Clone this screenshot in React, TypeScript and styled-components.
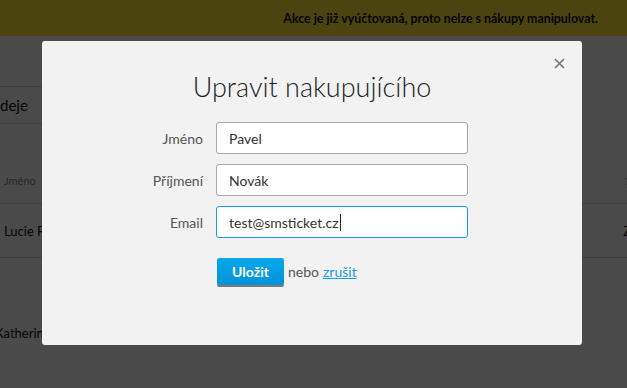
import React from 'react';
import styled, { createGlobalStyle } from 'styled-components';

const GlobalStyle = createGlobalStyle`
  html, body {
    margin: 0;
    padding: 0;
    width: 627px;
    height: 388px;
    overflow: hidden;
    background: #f7f7f7;
    font-family: Lato, "Open Sans", sans-serif;
    color: #333;
  }
`;

// ---- page under the dialog ----
const Page = styled.div`
  position: relative;
  width: 627px;
  height: 388px;
  overflow: hidden;
`;

const Banner = styled.div`
  height: 36px;
  background: #fae339;
  display: flex;
  align-items: center;
  justify-content: flex-end;
  padding-right: 29px;
  font-size: 12.4px;
  font-weight: 700;
  color: #111;
`;

const Tabs = styled.div`
  margin-top: 50px;
  width: 300px;
  height: 36px;
  border-top: 1px solid #d3d3d3;
  border-bottom: 1px solid #d3d3d3;
  display: flex;
  align-items: center;
  font-size: 15px;
  color: #111;
`;

const Table = styled.div`
  margin-top: 33px;
  display: flex;
  flex-direction: column;
`;

const Row = styled.div<{ $head?: boolean; $line?: boolean; $gap?: number; $shift?: number }>`
  height: ${(p) => (p.$head ? '46px' : '53px')};
  margin-top: ${(p) => p.$gap ?? 0}px;
  margin-left: ${(p) => p.$shift ?? 0}px;
  display: flex;
  align-items: center;
  justify-content: space-between;
  padding: 0 0 0 4px;
  border-bottom: ${(p) => (p.$line ? '1px solid #d3d3d3' : 'none')};
  font-size: ${(p) => (p.$head ? '11px' : '13px')};
  color: ${(p) => (p.$head ? '#888' : '#111')};
`;

const Cut = styled.span`
  margin-right: -4px;
`;

// ---- dialog ----
const Overlay = styled.div`
  position: absolute;
  inset: 0;
  background: rgba(0, 0, 0, 0.7);
`;

const Modal = styled.div`
  position: absolute;
  left: 42px;
  top: 41px;
  width: 540px;
  height: 304px;
  box-sizing: border-box;
  background: #f2f2f2;
  border-radius: 3px;
  padding-top: 26px;
`;

const Close = styled.button`
  position: absolute;
  top: 15px;
  right: 16px;
  width: 14px;
  height: 14px;
  padding: 0;
  border: 0;
  background: none;
  display: flex;
  align-items: center;
  justify-content: center;
`;

const Title = styled.h2`
  margin: 0 0 15px;
  text-align: center;
  font-size: 27px;
  font-weight: 300;
  line-height: 40px;
  color: #222;
`;

const Form = styled.form`
  display: flex;
  flex-direction: column;
  gap: 10px;
`;

const Field = styled.label`
  display: flex;
  align-items: center;
  gap: 13px;
`;

const Label = styled.span`
  width: 161px;
  text-align: right;
  font-size: 14px;
  color: #555;
`;

const Input = styled.div<{ $focus?: boolean }>`
  width: 252px;
  height: 32px;
  box-sizing: border-box;
  display: flex;
  align-items: center;
  padding-left: 12px;
  background: #fff;
  border: 1px solid ${(p) => (p.$focus ? '#1b9ce2' : '#a8a8a8')};
  border-radius: 3px;
  font-size: 14px;
  color: #333;
`;

const Caret = styled.span`
  display: inline-block;
  width: 1px;
  height: 17px;
  margin-left: 1px;
  background: #222;
`;

const Actions = styled.div`
  margin: 20px 0 0 175px;
  display: flex;
  align-items: center;
  gap: 4px;
  font-size: 14px;
  color: #555;
`;

const SaveButton = styled.button`
  width: 67px;
  height: 27px;
  border: 0;
  border-radius: 2px;
  background: linear-gradient(#0ba8ec, #0092d9);
  box-shadow: 0 2px 0 #7a7a7a;
  color: #fff;
  font-family: inherit;
  font-size: 14px;
  font-weight: 700;
`;

const CancelLink = styled.a`
  color: #1b9ce2;
  text-decoration: underline;
`;

export default function App() {
  return (
    <>
      <GlobalStyle />
      <Page>
        <Banner>Akce je již vyúčtovaná, proto nelze s nákupy manipulovat.</Banner>
        <Tabs>deje</Tabs>
        <Table>
          <Row $head $line>
            <span>Jméno</span>
            <Cut>1</Cut>
          </Row>
          <Row $line>
            <span>Lucie F</span>
            <Cut>Z</Cut>
          </Row>
          <Row $gap={48} $shift={-9}>
            <span>Katherine</span>
          </Row>
        </Table>
        <Overlay />
        <Modal>
          <Close aria-label="Zavřít">
            <svg width="11" height="11" viewBox="0 0 11 11">
              <path d="M1 1 L10 10 M10 1 L1 10" stroke="#777" strokeWidth="1.7" />
            </svg>
          </Close>
          <Title>Upravit nakupujícího</Title>
          <Form>
            <Field>
              <Label>Jméno</Label>
              <Input>Pavel</Input>
            </Field>
            <Field>
              <Label>Příjmení</Label>
              <Input>Novák</Input>
            </Field>
            <Field>
              <Label>Email</Label>
              <Input $focus>
                test@smsticket.cz
                <Caret />
              </Input>
            </Field>
          </Form>
          <Actions>
            <SaveButton type="button">Uložit</SaveButton>
            <span>nebo</span>
            <CancelLink href="#">zrušit</CancelLink>
          </Actions>
        </Modal>
      </Page>
    </>
  );
}
